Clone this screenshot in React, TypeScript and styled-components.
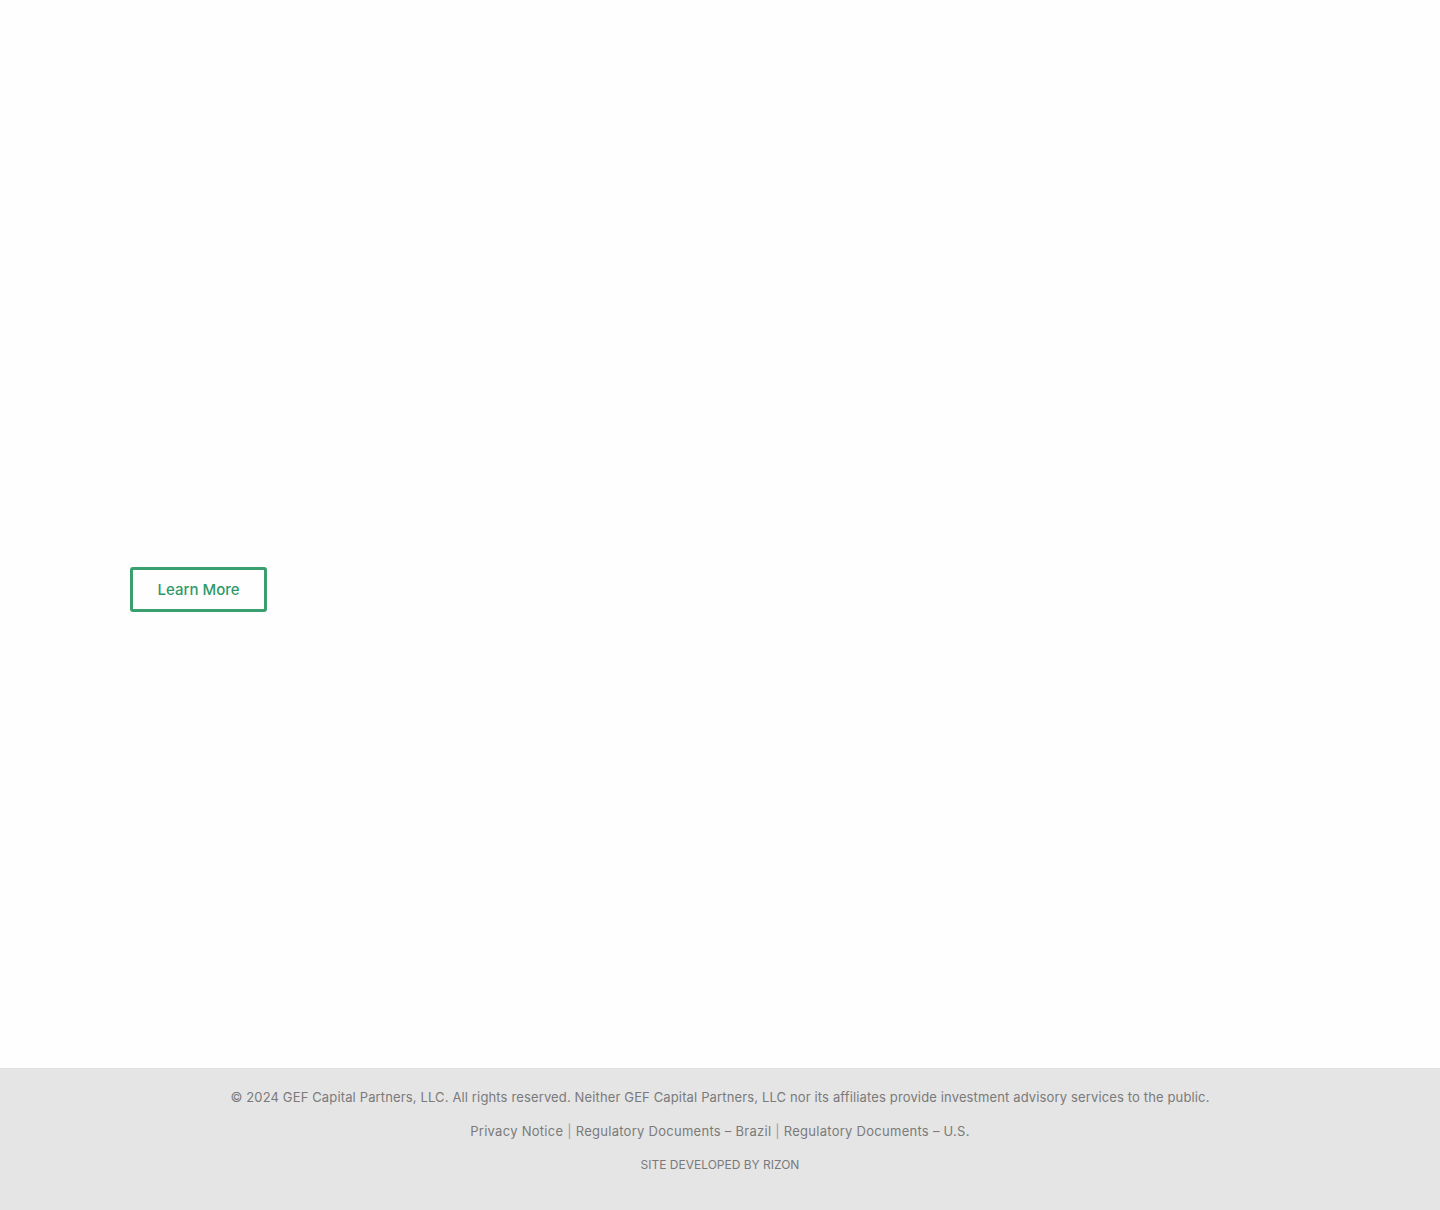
import React from "react";
import styled, { createGlobalStyle } from "styled-components";

const GlobalStyle = createGlobalStyle`
	html, body {
		margin: 0;
		padding: 0;
		background: #fefefe;
		font-family: Inter, "Noto Sans", sans-serif;
	}
`;

const Page = styled.div`
	display: flex;
	flex-direction: column;
	min-height: 1210px;
`;

const Hero = styled.section`
	height: 1068px;
	padding: 567px 0 0 130px;
	box-sizing: border-box;
`;

const OutlineButton = styled.a`
	display: inline-flex;
	align-items: center;
	justify-content: center;
	box-sizing: border-box;
	width: 137px;
	height: 45px;
	border: 3px solid #3a9e6f;
	border-radius: 3px;
	color: #2f9a68;
	font-size: 15px;
	font-weight: 500;
	text-decoration: none;
	cursor: pointer;
`;

const Footer = styled.footer`
	flex: 1;
	display: flex;
	flex-direction: column;
	align-items: center;
	background: #e5e5e5;
	border-top: 1px solid #e0e0e0;
	padding-top: 18px;
	gap: 14px;
	color: #7a7a7a;
	font-size: 13px;
`;

const Line = styled.p<{ $size?: number; $spacing?: number }>`
	margin: 0;
	line-height: 20px;
	font-size: ${(p) => p.$size ?? 13}px;
	letter-spacing: ${(p) => p.$spacing ?? 0}px;
`;

const FooterLink = styled.a`
	color: inherit;
	text-decoration: none;
`;

const Sep = styled.span`
	color: #9a9a9a;
`;

export default function App() {
	return (
		<Page>
			<GlobalStyle />
			<Hero>
				<OutlineButton>Learn More</OutlineButton>
			</Hero>
			<Footer>
				<Line $spacing={0.14}>
					© 2024 GEF Capital Partners, LLC. All rights reserved. Neither GEF Capital Partners, LLC nor its
					affiliates provide investment advisory services to the public.
				</Line>
				<Line $spacing={0.27}>
					<FooterLink>Privacy Notice</FooterLink> <Sep>|</Sep> <FooterLink>Regulatory Documents – Brazil</FooterLink>{" "}
					<Sep>|</Sep> <FooterLink>Regulatory Documents – U.S.</FooterLink>
				</Line>
				<Line $size={12}>SITE DEVELOPED BY RIZON</Line>
			</Footer>
		</Page>
	);
}
